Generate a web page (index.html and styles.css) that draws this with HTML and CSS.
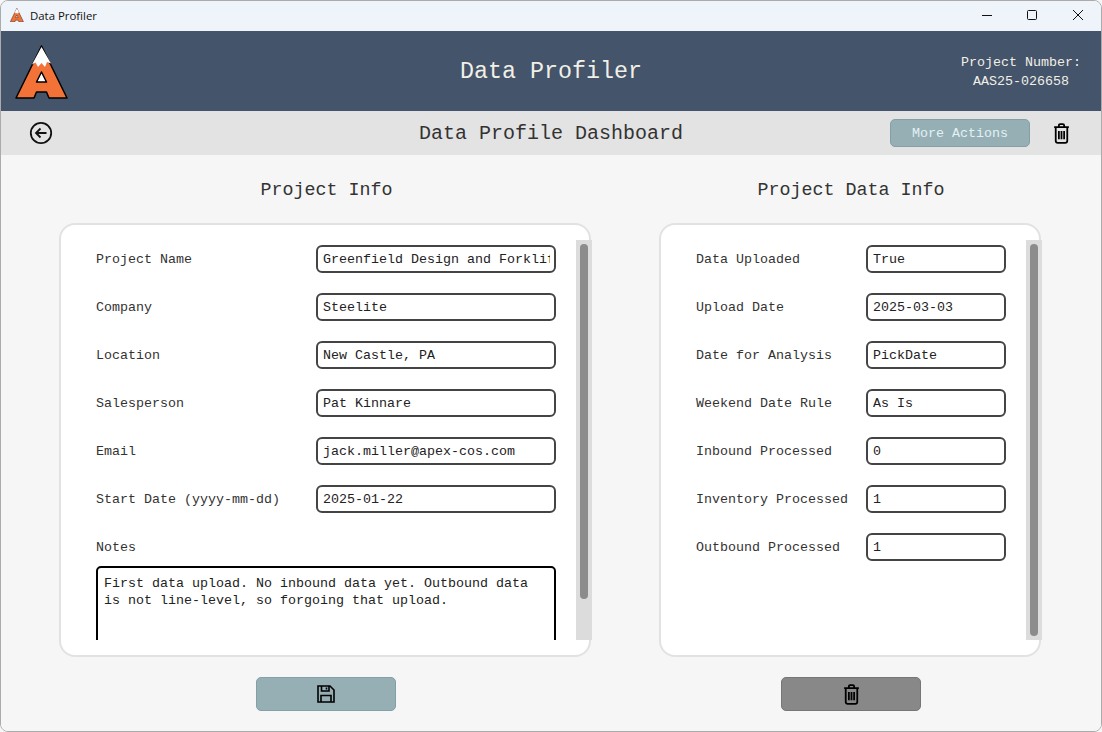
FILE: index.html
```html
<!DOCTYPE html>
<html lang="en">
<head>
<meta charset="utf-8">
<title>Data Profiler</title>
<link rel="stylesheet" href="styles.css">
</head>
<body>
<div class="window">
  <div class="titlebar">
    <div class="titlebar-left">
      <svg class="app-icon" viewBox="0 0 54 54"><use href="#logo"/></svg>
      <span>Data Profiler</span>
    </div>
    <div class="win-controls">
      <svg viewBox="0 0 12 12"><path d="M2 6.500H12" /></svg>
      <svg viewBox="0 0 12 12"><rect x="1.500" y="1.500" width="9" height="9" rx="1"/></svg>
      <svg viewBox="0 0 12 12"><path d="M1 1L11 11M11 1L1 11"/></svg>
    </div>
  </div>

  <header class="app-header">
    <svg class="logo" viewBox="0 0 54 54">
      <defs>
        <g id="logo">
          <path d="M26.500 1L52 53H34L31.500 47H21.500L19 53H1Z" fill="#f37237" stroke="#000" stroke-width="1.500" stroke-linejoin="round"/>
          <path d="M26.500 2L36 18.500L32 17L30 22L26.500 18L23 22L20.500 17.500L17 19.500Z" fill="#fff"/>
          <path d="M26.500 27L31.500 37H21.500Z" fill="#fff" stroke="#000" stroke-width="1.500" stroke-linejoin="round"/>
        </g>
      </defs>
      <use href="#logo"/>
    </svg>
    <h1 class="app-title">Data Profiler</h1>
    <div class="project-number">
      <div>Project Number:</div>
      <div>AAS25-026658</div>
    </div>
  </header>

  <div class="subheader">
    <div class="sub-left">
      <svg class="icon-back" viewBox="0 0 24 24"><circle cx="12" cy="12" r="10.200"/><path d="M17.500 12H7M11.500 7.500L7 12L11.500 16.500"/></svg>
    </div>
    <h2 class="sub-title">Data Profile Dashboard</h2>
    <div class="sub-right">
      <button class="btn btn-more" type="button">More Actions</button>
      <svg class="icon-trash" viewBox="0 0 16 20"><path d="M1 4H15M5.500 4V2.200Q5.500 1 6.700 1H9.300Q10.500 1 10.500 2.200V4M2.500 4V17Q2.500 19 4.500 19H11.500Q13.500 19 13.500 17V4M5.500 7.500V15.500M8 7.500V15.500M10.500 7.500V15.500"/></svg>
    </div>
  </div>

  <main class="content">
    <section class="column column-left">
      <h3 class="section-title title-left">Project Info</h3>
      <div class="card">
        <div class="scroll scroll-left">
          <div class="row row-left"><label>Project Name</label><input type="text" value="Greenfield Design and Forklift Upgrade"></div>
          <div class="row row-left"><label>Company</label><input type="text" value="Steelite"></div>
          <div class="row row-left"><label>Location</label><input type="text" value="New Castle, PA"></div>
          <div class="row row-left"><label>Salesperson</label><input type="text" value="Pat Kinnare"></div>
          <div class="row row-left"><label>Email</label><input type="text" value="jack.miller@apex-cos.com"></div>
          <div class="row row-left"><label>Start Date (yyyy-mm-dd)</label><input type="text" value="2025-01-22"></div>
          <div class="row row-notes"><label>Notes</label></div>
          <textarea class="notes">First data upload. No inbound data yet. Outbound data is not line-level, so forgoing that upload.</textarea>
        </div>
        <div class="scrollbar"><div class="thumb thumb-left"></div></div>
      </div>
      <button class="btn btn-action btn-save" type="button" aria-label="Save">
        <svg class="icon-save" viewBox="0 0 18 18"><path d="M1 1H13L17 5V17H1ZM4.500 1V6H12V1M9.500 2.500V4.500M4 17V10.500H14V17"/></svg>
      </button>
    </section>

    <section class="column column-right">
      <h3 class="section-title">Project Data Info</h3>
      <div class="card">
        <div class="scroll scroll-right">
          <div class="row row-right"><label>Data Uploaded</label><input type="text" value="True"></div>
          <div class="row row-right"><label>Upload Date</label><input type="text" value="2025-03-03"></div>
          <div class="row row-right"><label>Date for Analysis</label><input type="text" value="PickDate"></div>
          <div class="row row-right"><label>Weekend Date Rule</label><input type="text" value="As Is"></div>
          <div class="row row-right"><label>Inbound Processed</label><input type="text" value="0"></div>
          <div class="row row-right"><label>Inventory Processed</label><input type="text" value="1"></div>
          <div class="row row-right"><label>Outbound Processed</label><input type="text" value="1"></div>
        </div>
        <div class="scrollbar"><div class="thumb thumb-right"></div></div>
      </div>
      <button class="btn btn-action btn-delete" type="button" aria-label="Delete">
        <svg class="icon-trash" viewBox="0 0 16 20"><path d="M1 4H15M5.500 4V2.200Q5.500 1 6.700 1H9.300Q10.500 1 10.500 2.200V4M2.500 4V17Q2.500 19 4.500 19H11.500Q13.500 19 13.500 17V4M5.500 7.500V15.500M8 7.500V15.500M10.500 7.500V15.500"/></svg>
      </button>
    </section>
  </main>
</div>
</body>
</html>
```

FILE: styles.css
```css
* { box-sizing: border-box; }

html, body {
  margin: 0;
  height: 100%;
  background: #f6f6f6;
  overflow: hidden;
}

body {
  font-family: "Liberation Mono", "Courier New", monospace;
  font-size: 13.33px;
  color: #333;
}

.window {
  width: 1102px;
  height: 732px;
  display: flex;
  flex-direction: column;
  border: 1px solid #ababab;
  border-radius: 8px;
  overflow: hidden;
}

.titlebar {
  height: 30px;
  flex: none;
  background: #eff4fb;
  display: flex;
  align-items: center;
  justify-content: space-between;
  padding: 0 0 2px 9px;
  font-family: "Open Sans", "Liberation Sans", sans-serif;
  font-size: 11.4px;
  color: #111;
}

.titlebar-left {
  display: flex;
  align-items: center;
  gap: 6px;
}

.app-icon { width: 14px; height: 14px; }

.win-controls {
  display: flex;
  gap: 34px;
  padding-right: 17px;
}

.win-controls svg {
  width: 12px;
  height: 12px;
  fill: none;
  stroke: #111;
  stroke-width: 1;
}

.app-header {
  height: 80px;
  flex: none;
  background: #44546a;
  display: grid;
  grid-template-columns: 1fr auto 1fr;
  align-items: center;
  padding: 0 20px;
  color: #f2efe6;
}

.logo {
  width: 54px;
  height: 54px;
  margin: 1px 0 0 -6px;
}

.app-title {
  margin: 2px 0 0;
  font-size: 23.33px;
  font-weight: 400;
}

.project-number {
  justify-self: end;
  text-align: center;
  line-height: 19px;
  margin-top: 2px;
}

.subheader {
  height: 44px;
  flex: none;
  background: #e3e3e3;
  display: grid;
  grid-template-columns: 1fr auto 1fr;
  align-items: center;
  padding: 0 31px;
}

.sub-left {
  display: flex;
  align-items: center;
  margin-left: -3px;
}

.icon-back {
  width: 24px;
  height: 24px;
  fill: none;
  stroke: #111;
  stroke-width: 1.8;
}

.sub-title {
  margin: 0;
  font-size: 20px;
  font-weight: 400;
  color: #333;
}

.sub-right {
  display: flex;
  justify-content: flex-end;
  align-items: center;
  gap: 23px;
}

.btn {
  font-family: inherit;
  font-size: 13.33px;
  border-radius: 5px;
  display: flex;
  align-items: center;
  justify-content: center;
  padding: 0;
  width: 140px;
}

.btn-more {
  height: 28px;
  background: #95afb4;
  border: 1px solid #83a0a6;
  color: #e3f1f4;
}

.icon-trash {
  width: 17px;
  height: 21px;
  fill: none;
  stroke: #000;
  stroke-width: 1.7;
}

.content {
  flex: 1;
  min-height: 0;
  background: #f6f6f6;
  display: flex;
  gap: 68px;
  padding: 0 0 0 58px;
}

.column {
  display: flex;
  flex-direction: column;
  align-items: center;
}

.column-left { width: 532px; }
.column-right { width: 382px; }

.section-title {
  margin: 25px 0 22px;
  padding-left: 2px;
  font-size: 18.33px;
  line-height: 21px;
  font-weight: 400;
  color: #333;
}

.title-left { padding-left: 3px; }

.card {
  width: 100%;
  height: 434px;
  background: #fff;
  border: 2px solid #e2e2e2;
  border-radius: 16px;
  padding: 15px 0 0;
  display: flex;
  align-items: flex-start;
}

.scroll {
  flex: 1;
  min-width: 0;
  height: 400px;
  overflow: hidden;
  padding: 5px 0 0 35px;
}

.scrollbar {
  flex: none;
  width: 16px;
  height: 400px;
  margin-right: -3px;
  padding: 4px;
  background: #dcdcdc;
}

.thumb {
  background: #8c8c8c;
  border-radius: 4px;
}

.thumb-left { height: 355px; }
.thumb-right { height: 392px; }

.row {
  display: flex;
  align-items: center;
  height: 28px;
  margin-bottom: 20px;
}

.row label { flex: none; color: #333; }
.row-left label { width: 220px; }
.row-right label { width: 170px; }

.row input {
  font-family: inherit;
  font-size: 13.33px;
  color: #222;
  height: 28px;
  border: 2px solid #444;
  border-radius: 6px;
  padding: 0 4px 0 5px;
  background: #fff;
  outline: none;
}

.row-left input { width: 240px; }
.row-right input { width: 140px; }

.row-notes { margin-bottom: 5px; }

.notes {
  display: block;
  width: 460px;
  height: 120px;
  font-family: inherit;
  font-size: 13.33px;
  line-height: 17px;
  color: #222;
  border: 2px solid #000;
  border-radius: 5px;
  padding: 7px 6px;
  resize: none;
  outline: none;
  overflow: hidden;
  background: #fff;
}

.btn-action {
  height: 34px;
  margin-top: 20px;
  flex: none;
  position: relative;
  left: 1px;
}

.btn-save {
  background: #95afb4;
  border: 1px solid #83a0a6;
}

.btn-delete {
  background: #888;
  border: 1px solid #767676;
}

.icon-save {
  width: 18px;
  height: 18px;
  fill: none;
  stroke: #000;
  stroke-width: 1.6;
}
```
